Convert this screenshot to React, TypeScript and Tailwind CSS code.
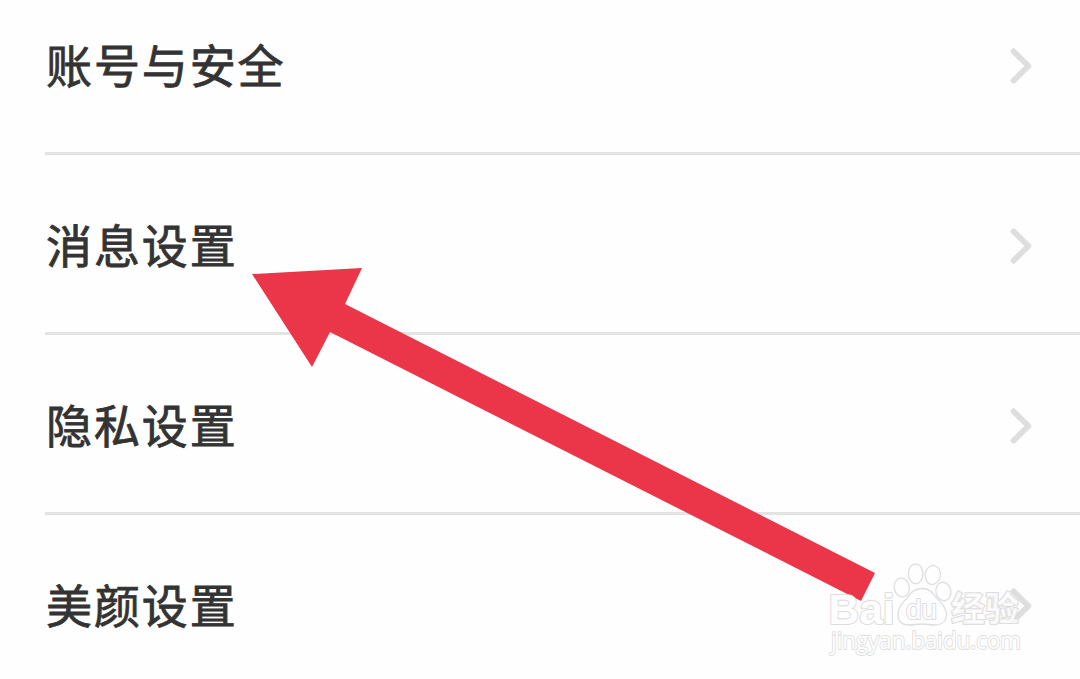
interface RowProps {
    label: string;
    last?: boolean;
}

const Chevron = () => (
    <svg className="mt-[5px] h-9 w-6 shrink-0" viewBox="0 0 24 36" fill="none" stroke="#dedede" strokeWidth="5.8" strokeLinecap="round" strokeLinejoin="round">
        <path d="M4.6 3.4 L19.4 18 L4.6 32.6" />
    </svg>
);

const Row = ({ label, last }: RowProps) => (
    <li className={`ml-[45px] flex h-[180px] items-center justify-between border-b-3 pr-[47px] ${last ? "border-transparent" : "border-[#e3e3e3]"}`}>
        <span className="mb-px ml-px text-[46px] leading-none tracking-[1.9px] text-[#333333] [-webkit-text-stroke:0.8px_#333333]">{label}</span>
        <Chevron />
    </li>
);

const Arrow = () => (
    <svg className="absolute inset-0" width="1080" height="679" viewBox="0 0 1080 679">
        <path d="M252 274 L362 268 L345 304 L875 573 L861 601 L330 332 L312 367 Z" fill="#eb3649" />
    </svg>
);

const Watermark = () => (
    <svg className="absolute inset-0" width="1080" height="679" viewBox="0 0 1080 679">
        <g fill="#fefefe" stroke="#dedede" strokeWidth="1.3">
            <ellipse cx="901.8" cy="587.5" rx="7.5" ry="9.5" transform="rotate(-10 901.8 587.5)" />
            <ellipse cx="915.7" cy="573.8" rx="7.2" ry="10" />
            <ellipse cx="932.7" cy="575" rx="7.6" ry="9.6" transform="rotate(10 932.7 575)" />
            <ellipse cx="943.4" cy="591.5" rx="7.5" ry="9.3" transform="rotate(-12 943.4 591.5)" />
            <path d="M922 588.500 C928 588.500 932 591 935 596 C939 602 946.500 606 946.500 614 C946.500 621 942 625 935 625 C930 625 927 624 922 624 C917 624 914 625 909 625 C902 625 898 621 898 614 C898 606 904 602 908 597 C911 592 915 588.500 922 588.500 Z" />
        </g>
        <g stroke="#dedede" strokeLinejoin="round" strokeWidth="2.2" paintOrder="stroke" fill="#fefefe">
            <text x="828.500" y="623.500" fontSize="43" fontWeight="700" textLength="66" lengthAdjust="spacingAndGlyphs" className="font-['Liberation_Sans',sans-serif]">Bai</text>
            <text x="906" y="619" fontSize="28" textLength="31" lengthAdjust="spacingAndGlyphs" className="font-['Liberation_Sans',sans-serif]">du</text>
            <text x="951" y="621" fontSize="34" fontWeight="700" fillOpacity="0.75" textLength="68" className="font-['Noto_Sans_CJK_SC',sans-serif]">经验</text>
            <text x="831" y="649" fontSize="23" strokeWidth="1.8" textLength="190" lengthAdjust="spacingAndGlyphs" className="font-['Open_Sans',sans-serif]">jingyan.baidu.com</text>
        </g>
    </svg>
);

const rows = ["账号与安全", "消息设置", "隐私设置", "美颜设置"];

const App = () => {
    return (
        <main className="relative h-[679px] w-[1080px] overflow-hidden bg-[#fefefe] font-['Noto_Sans_CJK_SC',sans-serif]">
            <ul className="-mt-[25px]">
                {rows.map((label, i) => (
                    <Row key={label} label={label} last={i === rows.length - 1} />
                ))}
            </ul>
            <Arrow />
            <Watermark />
        </main>
    );
};

export default App;
